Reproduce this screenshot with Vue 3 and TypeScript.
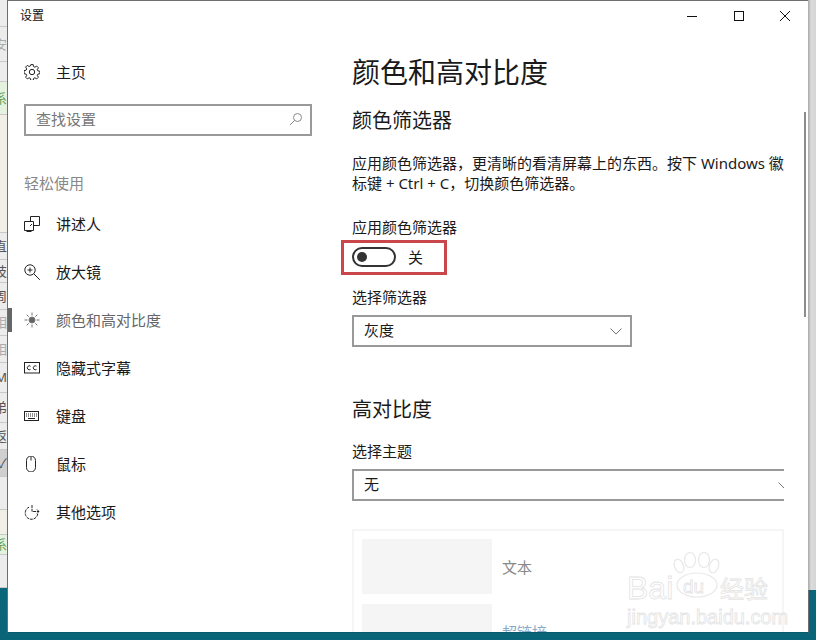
<script setup lang="ts">
interface StripRow { h: number; text?: string; kind?: string }
const stripRows: StripRow[] = [
  { h: 27 }, { h: 35, text: '安', kind: 'faint' }, { h: 20 }, { h: 33, text: '系', kind: 'green' },
  { h: 118, kind: 'beige' }, { h: 27, text: '直' }, { h: 23, text: '技' }, { h: 27, text: '周' },
  { h: 26, text: '相', kind: 'faint' }, { h: 27, text: '相', kind: 'faint' }, { h: 30, text: 'M' },
  { h: 30, text: '弟' }, { h: 27, text: '返' }, { h: 27, text: '✓', kind: 'grey' },
  { h: 33 }, { h: 25, kind: 'beige' }, { h: 20, text: '系', kind: 'green' }, { h: 33 },
]
const navItems = [
  { label: '讲述人', icon: 'narrator' },
  { label: '放大镜', icon: 'zoom' },
  { label: '颜色和高对比度', icon: 'sun', active: true },
  { label: '隐藏式字幕', icon: 'cc' },
  { label: '键盘', icon: 'keyboard' },
  { label: '鼠标', icon: 'mouse' },
  { label: '其他选项', icon: 'other' },
]
</script>

<template>
  <div class="desktop">
    <div class="strip">
      <div
        v-for="(row, i) in stripRows"
        :key="i"
        class="strip-row"
        :class="row.kind"
        :style="{ height: row.h + 'px' }"
      >{{ row.text }}</div>
    </div>

    <div class="window">
      <header class="titlebar">
        <span class="title">设置</span>
        <div class="controls">
          <svg width="46" height="32" viewBox="0 0 46 32"><path d="M17 16.500h10" stroke="#111" fill="none" /></svg>
          <svg width="46" height="32" viewBox="0 0 46 32"><rect x="18.500" y="11.500" width="9" height="9" stroke="#111" fill="none" /></svg>
          <svg width="46" height="32" viewBox="0 0 46 32"><path d="M18 11l10 10M28 11L18 21" stroke="#111" fill="none" /></svg>
        </div>
      </header>

      <div class="body">
        <aside class="sidebar">
          <div class="nav-item">
            <svg class="icon" viewBox="0 0 16 16" fill="none" stroke="#222">
              <circle cx="8" cy="8" r="2.700" />
              <path d="M6.800.6h2.400l.4 2 1.300.6 1.800-1.100 1.700 1.700-1.100 1.800.6 1.300 2 .4v2.400l-2 .4-.6 1.300 1.100 1.800-1.700 1.700-1.800-1.100-1.300.6-.4 2H6.800l-.4-2-1.300-.6-1.800 1.100-1.700-1.700 1.100-1.800-.6-1.300-2-.4V6.600l2-.4.6-1.300-1.100-1.800 1.700-1.700 1.800 1.100 1.300-.6z" />
            </svg>
            <span>主页</span>
          </div>
          <div class="search">
            <span>查找设置</span>
            <svg width="14" height="14" viewBox="0 0 14 14" fill="none" stroke="#888"><circle cx="8.500" cy="5.500" r="4" /><path d="M5.500 8.500L1 13" /></svg>
          </div>
          <div class="group">轻松使用</div>
          <div v-for="item in navItems" :key="item.label" class="nav-item" :class="{ active: item.active }">
            <i v-if="item.active" class="marker"></i>
            <svg class="icon" viewBox="0 0 16 16" fill="none" :stroke="item.active ? '#777' : '#222'">
              <template v-if="item.icon === 'narrator'">
                <path d="M6.500 5V.5h9v9h-6M.5 5.500h9v9M9.500 14.500H.5v-9M5 14.500v1M2.500 15.500h5M6 10l2-2" />
              </template>
              <template v-else-if="item.icon === 'zoom'">
                <circle cx="6" cy="6" r="5.200" /><path d="M9.800 9.800l6 6M3.500 6h5M6 3.500v5" />
              </template>
              <template v-else-if="item.icon === 'sun'">
                <circle cx="8" cy="8" r="3" fill="#666" /><path d="M8 .5v3M8 12.500v3M.5 8h3M12.500 8h3M2.700 2.700l2 2M11.300 11.300l2 2M13.300 2.700l-2 2M4.700 11.300l-2 2" />
              </template>
              <template v-else-if="item.icon === 'cc'">
                <rect x=".5" y="2.500" width="15" height="10.500" /><path d="M6.500 6.200a2 2 0 1 0 0 3.200M12.500 6.200a2 2 0 1 0 0 3.200" />
              </template>
              <template v-else-if="item.icon === 'keyboard'">
                <rect x=".5" y="3.500" width="14" height="9" /><path d="M2 6h11M2 8h11" stroke-dasharray="1 1" /><path d="M4 10.500h7" />
              </template>
              <template v-else-if="item.icon === 'mouse'">
                <path d="M2.500 4.500a4.500 4.500 0 0 1 9 0v7a4.500 4.500 0 0 1-9 0zM7 .5v4" />
              </template>
              <template v-else>
                <path d="M5 3.200a6.300 6.300 0 1 0 8.800 6.300M8 1v6.500h7M13 5.500l2 2-2 2" stroke-dasharray="3 .8" />
              </template>
            </svg>
            <span>{{ item.label }}</span>
          </div>
        </aside>

        <main class="content">
          <h1>颜色和高对比度</h1>
          <h2 class="first">颜色筛选器</h2>
          <p class="desc">应用颜色筛选器，更清晰的看清屏幕上的东西。按下 Windows 徽标键 + Ctrl + C，切换颜色筛选器。</p>
          <div class="label toggle-label">应用颜色筛选器</div>
          <div class="toggle-row">
            <span class="toggle"><i></i></span>
            <span>关</span>
            <span class="callout"></span>
          </div>
          <div class="label filter-label">选择筛选器</div>
          <div class="select short">
            <span>灰度</span>
            <svg width="12" height="7" viewBox="0 0 12 7" fill="none" stroke="#777"><path d="M.5.5L6 6l5.500-5.500" /></svg>
          </div>
          <h2 class="second">高对比度</h2>
          <div class="label theme-label">选择主题</div>
          <div class="select wide">
            <span>无</span>
            <svg width="12" height="7" viewBox="0 0 12 7" fill="none" stroke="#777"><path d="M.5.5L6 6l5.500-5.500" /></svg>
          </div>
          <div class="preview">
            <div class="preview-row"><div class="swatch"></div><span class="sample">文本</span></div>
            <div class="preview-row"><div class="swatch"></div><span class="link">超链接</span></div>
          </div>
        </main>
        <div class="scrollbar"></div>
      </div>

      <div class="watermark">
        <svg class="paw" width="47" height="46" viewBox="0 0 47 46" fill="#fff" stroke="#e8e8e8" stroke-width="1.200">
          <ellipse cx="6" cy="14" rx="4.500" ry="7" transform="rotate(-20 6 14)" />
          <ellipse cx="17" cy="8" rx="5.500" ry="7.500" />
          <ellipse cx="31" cy="8" rx="5.500" ry="7.500" />
          <ellipse cx="41" cy="14" rx="4.500" ry="7" transform="rotate(20 41 14)" />
          <ellipse cx="24" cy="33" rx="20" ry="12" />
        </svg>
        <span class="wm-bai">Bai</span>
        <span class="wm-du">du</span>
        <span class="wm-cn">经验</span>
        <div class="wm-url">jingyan.baidu.com</div>
      </div>
    </div>
  </div>
</template>

<style scoped>
.desktop {
  position: relative;
  width: 816px;
  height: 640px;
  overflow: hidden;
  background: linear-gradient(#0f7c92, #0a6478);
  font-family: "Noto Sans", "Noto Sans CJK SC", sans-serif;
  color: #1a1a1a;
  font-size: 15px;
}
.desktop::after {
  content: "";
  position: absolute;
  top: 0;
  right: 0;
  width: 8px;
  height: 590px;
  background: linear-gradient(90deg, #a8a8a8, #dcdcdc 40%, #d4d4d4);
}
.strip {
  position: absolute;
  left: 0;
  top: 0;
  width: 7px;
  display: flex;
  flex-direction: column;
  background: #ececec;
}
.strip-row {
  display: flex;
  align-items: center;
  justify-content: flex-end;
  overflow: hidden;
  border-bottom: 1px solid #c8c8c8;
  box-sizing: border-box;
  font-size: 13px;
  line-height: 1;
  white-space: nowrap;
  color: #555;
}
.strip-row.faint { color: #aaa; }
.strip-row.green { color: #5d9e4f; background: #e6f2e0; }
.strip-row.beige { background: #f0f0e6; }
.strip-row.grey { background: #cfcfcf; }

.window {
  position: absolute;
  left: 7px;
  top: 0;
  width: 802px;
  height: 633px;
  box-sizing: border-box;
  border: 1px solid #6e6e6e;
  border-bottom-color: #0a5a6c;
  background: #fff;
  display: flex;
  flex-direction: column;
  overflow: hidden;
}
.titlebar {
  flex: none;
  height: 31px;
  display: flex;
  align-items: center;
  justify-content: space-between;
}
.title {
  margin-left: 12px;
  margin-top: -2px;
  font-size: 12px;
  line-height: 26px;
  color: #111;
}
.controls {
  display: flex;
}
.controls svg { display: block; margin-top: -1px; }
.body {
  position: relative;
  flex: 1;
  display: flex;
  min-height: 0;
}
.sidebar {
  flex: none;
  width: 328px;
  box-sizing: border-box;
  padding: 16px 24px 0 16px;
}
.nav-item {
  position: relative;
  height: 48px;
  display: flex;
  align-items: center;
  gap: 16px;
  line-height: 20px;
}
.nav-item.active { color: #666; }
.marker {
  position: absolute;
  left: -16px;
  top: 12px;
  width: 4px;
  height: 24px;
  background: #666;
}
.icon {
  flex: none;
  width: 16px;
  height: 16px;
}
.search {
  margin-top: 8px;
  height: 32px;
  box-sizing: border-box;
  border: 2px solid #999;
  padding: 0 7px 2px 10px;
  display: flex;
  align-items: center;
  justify-content: space-between;
  color: #777;
  line-height: 20px;
}
.group {
  margin-top: 37px;
  margin-bottom: 7px;
  line-height: 20px;
  color: #888;
}
.content {
  flex: none;
  width: 448px;
  box-sizing: border-box;
  padding-left: 16px;
  overflow: hidden;
}
h1 {
  margin: 21px 0 0;
  font-size: 28px;
  line-height: 38px;
  font-weight: 400;
}
h2 {
  margin: 0;
  font-size: 20px;
  line-height: 28px;
  font-weight: 400;
}
h2.first { margin-top: 16px; }
h2.second { margin-top: 49px; }
.desc {
  margin: 18px 0 0;
  line-height: 20px;
  width: 432px;
}
.label { line-height: 20px; }
.toggle-label { margin-top: 24px; }
.filter-label { margin-top: 20px; }
.theme-label { margin-top: 17px; }
.toggle-row {
  position: relative;
  margin-top: 10px;
  height: 20px;
  display: flex;
  align-items: center;
  gap: 12px;
  line-height: 20px;
}
.toggle {
  box-sizing: border-box;
  width: 44px;
  height: 20px;
  border: 2px solid #333;
  border-radius: 10px;
  display: flex;
  align-items: center;
  padding-left: 3px;
}
.toggle i {
  width: 10px;
  height: 10px;
  border-radius: 50%;
  background: #333;
}
.callout {
  position: absolute;
  left: -11px;
  top: -7px;
  width: 106px;
  height: 35px;
  box-sizing: border-box;
  border: 3px solid #c9474b;
}
.select {
  margin-top: 8px;
  height: 32px;
  box-sizing: border-box;
  border: 2px solid #999;
  padding: 0 8px 2px 10px;
  display: flex;
  align-items: center;
  justify-content: space-between;
  line-height: 20px;
}
.select svg { margin-top: 2px; }
.select.short { width: 280px; }
.select.wide {
  width: 440px;
  border-right: none;
  padding-right: 0;
}
.select.wide svg { margin-right: 2px; }
.preview {
  margin-top: 28px;
  width: 432px;
  box-sizing: border-box;
  border: 2px solid #f5f5f5;
  padding: 8px;
  display: flex;
  flex-direction: column;
  gap: 10px;
}
.preview-row {
  display: flex;
  align-items: center;
  gap: 10px;
  height: 55px;
}
.swatch {
  width: 130px;
  height: 55px;
  background: #f5f5f5;
}
.sample { color: #888; }
.link { color: #88a9c8; }
.scrollbar {
  position: absolute;
  right: 2px;
  top: 80px;
  width: 2px;
  height: 205px;
  background: #8c8c8c;
}
.watermark {
  position: absolute;
  left: 619px;
  top: 551px;
  width: 150px;
  height: 76px;
  color: #fff;
  -webkit-text-stroke: 0.8px #e4e4e4;
  font-family: "Liberation Sans", sans-serif;
}
.paw {
  position: absolute;
  left: 46px;
  top: 0;
}
.wm-bai {
  position: absolute;
  left: 0;
  top: 21px;
  font-size: 32px;
  line-height: 30px;
}
.wm-du {
  position: absolute;
  left: 56px;
  top: 24px;
  font-size: 19px;
  line-height: 22px;
}
.wm-cn {
  position: absolute;
  left: 93px;
  top: 21px;
  font-family: "Noto Sans CJK SC", sans-serif;
  font-size: 24px;
  line-height: 30px;
}
.wm-url {
  position: absolute;
  left: 0;
  top: 55px;
  font-size: 20px;
  line-height: 20px;
  white-space: nowrap;
}
</style>
